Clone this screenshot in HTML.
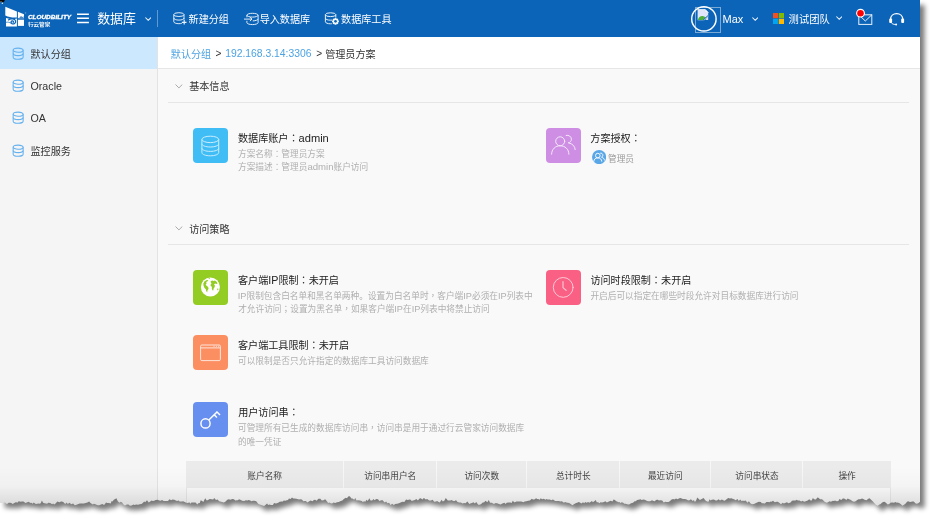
<!DOCTYPE html>
<html lang="zh-CN">
<head>
<meta charset="utf-8">
<title>数据库 - 管理员方案</title>
<style>
*{box-sizing:border-box;margin:0;padding:0}
html,body{width:930px;height:517px;overflow:hidden;background:#fff}
body{font-family:"Liberation Sans","Noto Sans CJK SC",sans-serif;color:#333;position:relative;-webkit-font-smoothing:antialiased}
.abs{position:absolute}
#shadow{position:absolute;left:0;top:0;width:930px;height:517px;z-index:0}
#app{will-change:transform;position:absolute;left:0;top:0;width:920px;height:512px;overflow:hidden;z-index:1;
  clip-path:url(#tear)}
#hdr{position:absolute;left:0;top:0;width:920px;height:37px;background:#0c64b8;color:#fff}
#hdr .t{position:absolute;white-space:nowrap;color:#fff;font-size:10.1px;line-height:14px}
#side{position:absolute;left:0;top:37px;width:158px;height:480px;background:#f5f5f5;border-right:1px solid #e3e3e3}
#side .it{position:absolute;left:0;width:157px;height:32px}
#side .it.sel{background:#cce8ff}
#side .it span{position:absolute;left:30.5px;top:11px;font-size:10.1px;line-height:14px;color:#333;white-space:nowrap}
#side .it svg{position:absolute;left:11.6px}
#main{position:absolute;left:158px;top:37px;width:762px;height:480px;background:#f9f9f9}
#crumb{position:absolute;left:0;top:0;width:762px;height:32px;background:#fff;border-bottom:1px solid #e6e6e6;font-size:10.1px;line-height:14px;white-space:nowrap}
#crumb a,#crumb span{position:absolute;top:10px;color:#333}
#crumb a{color:#4da3e2;text-decoration:none}
.sec{position:absolute;left:10px;width:741px;height:1px;background:#e6e6e6}
.sech{position:absolute;left:31.2px;font-size:10.1px;line-height:14px;color:#333;white-space:nowrap}
.chev{position:absolute;left:16.5px}
.tile{position:absolute;width:35px;height:35px;border-radius:4px}
.tile svg{position:absolute;left:0;top:0;width:35px;height:35px}
.ttl{position:absolute;font-size:10.1px;line-height:14px;color:#222;white-space:nowrap}
.sub{position:absolute;font-size:8.68px;line-height:12.8px;color:#afafaf;white-space:nowrap}
#tbl{position:absolute;left:27.8px;top:423.5px;width:705px;height:60px}
#tbl .tb{position:absolute;left:0;top:27.7px;width:705px;height:40px;background:#fbfbfb;border-left:1px solid #e9e9e9;border-right:1px solid #e9e9e9}
#tbl .th{position:absolute;top:0;height:27.7px;background:#ebebeb;font-size:8.68px;line-height:31.3px;color:#444;text-align:center;white-space:nowrap;border-right:1px solid #f7f7f7;overflow:hidden}
.l{font-size:1.06em;font-weight:normal}
.p{font-family:"Noto Sans CJK TC","Noto Sans CJK SC",sans-serif;font-style:normal;font-feature-settings:"locl" 0}
#fade{position:absolute;left:0;top:466px;width:920px;height:40px;background:linear-gradient(to bottom,rgba(0,0,0,0),rgba(0,0,0,.02) 50%,rgba(0,0,0,.115));pointer-events:none}
</style>
</head>
<body>
<svg width="0" height="0" style="position:absolute">
  <defs>
    <clipPath id="tear"><path id="tearp" d="M0,0H920V501.8L918.7,503.0L916.9,503.8L915.7,503.6L913.7,501.5L912.0,501.5L910.7,501.9L909.3,501.7L908.1,501.2L907.1,501.8L905.4,503.7L904.0,504.7L902.4,505.8L901.2,504.6L899.6,503.3L897.7,502.4L896.8,502.8L895.4,502.0L894.0,502.8L892.8,502.6L891.6,502.6L890.6,502.7L889.2,504.0L887.7,504.6L885.9,502.8L884.5,501.7L883.2,501.9L881.9,502.7L880.7,503.9L879.4,504.4L877.6,505.7L876.0,505.1L874.2,502.9L872.7,501.2L870.8,499.4L869.6,498.3L868.3,498.8L866.4,500.2L864.5,499.7L863.4,498.9L862.0,498.4L860.3,499.3L858.5,499.2L857.6,499.8L855.6,501.3L854.0,501.7L852.6,501.2L851.5,500.4L850.5,499.7L849.1,499.3L847.7,498.6L846.3,500.1L845.1,499.1L844.0,498.6L842.8,498.6L841.3,499.9L839.4,498.9L838.4,501.1L836.6,501.3L835.0,500.4L834.0,500.9L832.9,500.7L830.9,501.7L829.6,501.2L827.9,502.3L826.6,502.7L824.6,501.7L823.4,500.5L822.0,499.3L820.1,499.3L818.4,497.8L817.4,497.5L815.9,499.4L814.1,499.2L812.9,497.9L811.7,500.5L810.5,500.4L809.3,499.3L807.7,500.6L805.8,501.3L804.0,501.8L802.8,500.7L801.1,501.6L799.6,500.4L797.8,500.5L796.8,499.8L795.5,500.4L793.5,500.6L791.9,500.8L790.9,502.3L789.8,502.7L788.3,503.2L787.0,502.2L785.6,502.7L783.9,503.6L782.8,502.7L780.9,504.3L779.6,502.9L777.7,501.8L776.7,501.7L774.8,502.2L773.0,500.8L771.5,501.7L770.6,501.5L769.5,502.2L768.1,502.0L766.4,502.1L764.9,503.4L763.0,503.2L761.8,503.3L760.8,502.1L758.8,501.7L757.1,502.4L756.0,503.1L754.5,503.8L753.5,504.0L752.0,504.2L750.6,503.6L748.9,501.3L747.5,502.7L745.6,500.6L744.0,501.1L742.9,500.5L741.8,501.3L740.2,499.6L738.8,500.9L737.5,499.1L735.7,500.2L734.6,499.4L733.4,499.1L732.5,498.7L731.4,498.2L729.9,498.4L728.2,497.9L726.3,499.5L724.7,500.7L723.1,500.2L721.9,499.5L720.0,500.6L718.7,499.3L716.9,500.6L715.6,500.6L713.8,499.4L711.8,499.7L710.6,500.6L709.6,499.3L708.5,501.8L707.1,501.4L705.2,500.3L703.6,498.0L701.8,499.0L699.9,500.0L698.5,498.8L697.3,497.5L696.1,500.4L694.9,502.0L693.9,500.0L692.8,500.9L690.9,499.2L689.1,500.5L687.8,500.3L686.2,499.2L684.4,498.9L683.1,499.1L682.2,498.7L680.5,498.0L679.4,498.2L677.5,499.3L676.1,498.5L674.2,499.6L673.3,499.1L671.6,499.6L669.8,501.3L668.4,502.1L666.6,501.9L665.4,501.8L663.7,502.4L662.2,500.6L660.3,500.3L658.9,500.5L657.9,499.8L656.9,499.8L655.8,500.3L654.7,501.3L653.5,501.1L652.0,500.3L650.1,501.3L648.4,501.3L647.1,501.1L645.3,500.1L643.8,499.5L642.6,499.7L641.7,500.0L640.5,499.2L638.6,499.8L637.1,500.1L635.8,501.2L634.6,501.2L633.0,502.8L631.1,503.2L629.1,504.6L628.0,504.4L626.5,504.1L625.6,503.8L624.2,503.8L623.2,502.7L621.9,502.3L620.4,502.9L619.3,502.1L618.3,502.3L617.2,501.5L616.2,501.3L614.9,500.1L613.6,499.5L612.4,501.6L610.8,500.7L608.9,501.4L606.9,502.4L605.3,501.2L604.0,502.1L602.2,502.6L600.5,502.3L599.4,503.3L598.2,502.2L596.7,502.2L595.8,500.1L594.6,500.9L592.9,502.3L591.9,501.1L591.0,501.7L589.2,502.7L588.2,501.9L586.5,502.7L585.3,502.0L584.1,503.2L583.1,502.2L581.3,503.5L579.9,502.5L578.7,501.9L577.2,502.7L576.1,503.1L574.3,503.9L572.4,505.2L570.7,503.9L569.1,503.1L567.5,502.8L566.2,502.4L565.1,501.9L563.9,502.8L561.9,501.2L560.7,501.4L558.8,501.1L557.1,500.9L555.1,501.0L554.2,500.2L552.9,499.6L551.1,500.3L550.0,499.4L549.0,499.4L547.5,499.4L546.6,499.0L545.4,499.7L543.9,498.7L542.1,499.2L540.8,498.3L539.7,499.7L538.2,499.1L537.2,499.0L536.1,498.3L534.3,499.5L532.9,499.4L531.8,498.8L529.9,500.4L528.1,500.8L526.3,501.2L524.7,501.6L523.2,502.2L521.5,501.5L519.5,501.6L518.0,501.6L516.3,501.4L515.1,502.2L514.2,502.2L512.8,500.7L511.6,503.1L510.4,502.5L508.5,502.4L506.7,502.7L505.6,503.9L504.4,502.8L502.4,503.5L500.6,504.4L498.9,504.1L497.8,503.4L495.8,502.9L494.4,503.7L493.2,503.7L492.0,502.8L490.0,502.7L488.8,500.1L487.3,502.3L485.5,500.7L484.2,502.2L482.3,502.8L481.3,504.0L479.6,504.8L478.2,504.7L476.2,502.0L474.9,503.6L473.4,502.2L472.0,503.1L471.0,503.3L469.3,503.9L467.4,501.4L465.5,503.2L464.0,503.1L462.6,503.6L460.8,502.5L459.1,502.6L457.5,501.9L455.9,500.1L455.0,501.1L453.5,501.1L452.4,500.6L451.3,500.0L450.4,500.5L449.1,500.4L447.8,500.6L445.8,497.9L444.3,500.8L442.8,501.4L441.6,499.7L439.8,502.4L438.6,502.0L437.1,500.9L436.1,501.4L434.2,501.8L432.6,499.7L431.0,500.5L429.2,500.5L427.2,499.1L425.8,499.4L423.9,498.1L422.3,499.5L420.8,498.3L419.6,498.5L417.9,500.6L416.3,499.1L414.9,499.9L413.1,500.5L411.7,501.1L410.7,499.7L409.6,499.6L407.8,500.0L406.1,499.6L404.3,502.1L402.8,501.8L401.1,502.2L399.5,503.0L398.2,503.6L397.0,503.8L395.2,504.1L393.8,504.9L392.2,503.8L390.5,504.9L389.1,502.7L387.5,503.2L386.1,501.5L384.8,502.4L383.7,501.6L382.6,500.2L381.3,500.3L379.4,500.9L378.0,499.2L376.3,499.0L374.5,500.2L373.6,499.0L372.1,500.4L370.5,500.4L369.3,498.3L367.8,500.9L366.5,499.8L365.3,501.8L364.1,501.3L362.8,501.9L361.8,500.9L359.9,500.5L358.0,500.2L356.5,500.5L355.3,498.0L354.2,499.8L352.5,498.5L351.4,498.5L349.8,496.3L348.1,496.5L347.1,498.2L345.8,497.8L343.8,499.0L342.4,500.6L340.7,500.9L338.8,501.9L337.0,502.2L335.2,502.9L333.5,502.5L332.1,503.4L330.8,503.2L329.3,502.5L328.1,503.0L327.1,501.5L325.2,499.3L323.4,500.2L321.8,500.6L320.3,498.7L318.4,498.8L316.6,500.7L315.1,499.8L313.8,499.9L312.5,501.2L310.5,500.6L309.3,501.2L307.4,502.6L305.9,501.0L304.6,501.0L303.5,501.2L301.8,499.5L300.2,499.2L299.0,499.4L297.4,498.9L296.4,498.8L294.5,498.6L293.3,498.5L292.0,497.6L290.6,499.0L289.0,498.5L288.0,500.1L286.7,500.2L285.4,500.8L283.8,500.5L282.8,501.4L281.6,501.6L279.7,501.7L278.6,502.6L277.0,503.2L275.8,503.4L274.1,503.1L272.9,505.0L270.9,505.1L269.5,504.4L268.1,505.0L267.1,503.4L265.7,504.8L264.1,505.9L262.7,505.4L261.2,505.1L259.8,504.5L258.8,504.3L257.9,503.6L256.5,501.6L255.6,500.9L254.4,500.8L252.9,500.8L251.6,501.3L250.2,500.4L248.6,499.9L247.5,500.4L245.8,500.3L244.2,501.1L242.2,500.8L240.3,499.8L239.0,499.2L237.9,500.3L236.9,500.3L235.3,500.4L233.9,499.3L232.3,499.1L230.4,499.8L228.8,499.2L227.3,499.8L225.6,501.6L223.9,502.4L222.0,502.0L220.3,501.5L219.1,501.2L217.6,499.5L216.0,499.9L214.2,497.9L213.2,499.5L211.5,499.2L209.6,499.0L208.1,499.9L206.7,500.6L205.2,498.2L203.3,502.0L202.2,500.9L200.7,500.3L199.8,503.0L198.3,503.3L197.3,504.4L195.6,502.6L194.0,502.6L192.6,502.4L191.4,502.4L190.4,503.7L189.2,502.3L188.0,503.0L186.3,502.8L184.7,502.0L183.1,501.3L182.0,501.5L180.7,501.6L179.6,501.5L178.6,500.6L177.0,500.9L175.3,500.2L174.4,499.8L172.5,499.4L171.2,500.3L169.4,499.2L168.0,501.0L166.1,500.9L165.1,501.1L163.6,500.9L162.1,500.0L160.5,500.8L159.4,500.6L157.4,499.8L155.6,499.9L154.3,500.7L152.8,500.9L151.6,500.4L150.6,501.2L148.7,502.4L147.0,500.3L145.2,502.2L144.2,501.4L142.5,503.2L141.5,504.1L139.6,504.2L138.1,504.8L136.2,504.6L134.6,504.9L133.5,504.5L131.6,505.5L130.0,505.7L128.4,504.5L126.8,504.4L125.0,505.4L123.4,504.4L122.1,502.6L120.7,501.7L119.6,502.7L117.8,501.2L116.4,498.2L115.2,498.9L113.8,499.8L112.6,501.6L111.7,501.1L110.7,503.4L108.9,503.1L107.3,503.1L106.1,502.4L104.1,505.1L102.3,503.9L101.0,504.5L99.2,505.3L97.8,505.2L96.5,504.8L94.9,503.9L93.8,503.7L92.9,504.5L91.3,503.4L90.2,502.8L89.2,501.5L87.4,502.4L85.7,503.1L83.8,503.4L82.8,503.4L81.5,503.6L79.7,503.6L77.8,504.3L76.5,504.7L74.8,505.2L73.1,503.4L71.1,504.3L69.7,502.8L67.7,504.1L66.8,502.6L65.2,503.9L63.3,501.9L61.8,501.5L60.8,501.4L59.9,502.3L58.7,501.9L57.2,501.5L56.1,503.1L54.3,504.4L53.1,503.5L52.1,504.3L50.2,503.1L48.3,502.7L47.1,503.7L46.0,503.4L44.5,503.3L43.1,502.8L41.9,500.5L40.7,503.2L39.5,503.7L38.5,503.5L37.2,503.7L35.9,504.0L34.7,503.2L33.7,502.5L32.6,503.8L31.5,502.8L30.5,502.9L28.5,501.8L26.8,502.4L25.4,503.0L23.5,501.6L21.7,501.6L19.9,501.7L18.9,501.1L17.7,502.6L15.7,502.3L14.3,503.1L12.7,504.0L11.3,502.9L10.1,502.8L8.6,502.8L7.0,504.1L6.1,503.6L5.1,502.4L3.5,502.4L1.9,502.9L0.0,502.9Z"/></clipPath>
  </defs>
</svg>
<svg id="shadow" viewBox="0 0 930 517">
  <defs><filter id="blur" x="-5%" y="-5%" width="110%" height="110%"><feGaussianBlur stdDeviation="2.5"/></filter></defs>
  <use href="#tearp" transform="translate(4.6,5)" fill="#000" opacity="0.52" filter="url(#blur)"/>
</svg>
<div id="app">
  <div id="hdr">

    <!-- cursor artifact -->
    <svg class="abs" style="left:0;top:0" width="8" height="6" viewBox="0 0 8 6"><path d="M0 0H4.6C4.9 .9 4.3 1.7 3.3 1.9L2.9 2.5H1.9L1.6 1.9H0Z" fill="#060606"/><path d="M0 1.5H1.9L2.2 2.3H0Z" fill="#8d8d8d"/><circle cx="2.4" cy="3.2" r=".75" fill="#fff" opacity=".95"/></svg>
    <!-- logo -->
    <svg class="abs" style="left:0;top:0" width="76" height="37" viewBox="0 0 76 37">
      <g fill="#fff">
        <path d="M5.3 6.7L16.9 11.4V17.4C13.2 18 9 17 5.3 15.4Z"/>
        <path d="M6 18.1C9.5 19.2 13.5 19.3 16.9 18.5V26.6H6Z"/>
        <path d="M17.9 11.8L24 14.3V18.3H17.9Z"/>
        <path d="M17.9 19.7H24V25.9H17.9Z"/>
      </g>
      <path d="M8.4 19.9C10.6 18.2 14.9 18.5 15.6 20.9C16.2 23.1 13.7 24.5 11.9 23.6C10.6 22.9 10.8 21.1 12.2 20.8C13.3 20.6 13.9 21.6 13.2 22.3" fill="none" stroke="#0c64b8" stroke-width="1.25" stroke-linecap="round"/>
      <path d="M6 22.3C8 21.9 9.6 22.3 11 23.2" fill="none" stroke="#0c64b8" stroke-width=".7"/>
      <path d="M19.4 17.6L21 16L22.4 17L23.6 16.2V18.1H19.4Z" fill="#0c64b8" opacity=".75"/>
      <circle cx="25.5" cy="12.9" r=".55" fill="none" stroke="#fff" stroke-width=".25" opacity=".8"/>
      <text x="27.9" y="18.7" font-family="'Liberation Sans',sans-serif" font-size="5.4" font-weight="bold" font-style="italic" fill="#fff" stroke="#fff" stroke-width=".28" textLength="43.2" lengthAdjust="spacingAndGlyphs">CLOUDBILITY</text>
      <text x="27.9" y="25.6" font-family="'Liberation Sans','Noto Sans CJK SC',sans-serif" font-size="4.9" font-weight="bold" fill="#fff" opacity=".95" textLength="22.4" lengthAdjust="spacingAndGlyphs">行云管家</text>
    </svg>
    <!-- hamburger -->
    <svg class="abs" style="left:77px;top:13px" width="12" height="11" viewBox="0 0 12 11"><path d="M0 1.3H11.9M0 5.3H11.9M0 9.4H11.9" stroke="#fff" stroke-width="1.55"/></svg>
    <svg class="abs" style="left:145px;top:16.5px" width="6.4" height="4.2" viewBox="0 0 6.4 4.2"><path d="M.4 .5L3.2 3.3L6 .5" fill="none" stroke="#fff" stroke-width="1.05" opacity=".95"/></svg>
    <div class="abs" style="left:157.2px;top:10px;width:1px;height:16.5px;background:rgba(255,255,255,.35)"></div>
    <!-- new group -->
    <svg class="abs" style="left:172px;top:11px" width="16" height="15" viewBox="0 0 16 15" fill="none" stroke="#fff" stroke-width=".95" opacity=".92">
      <ellipse cx="6.9" cy="3.6" rx="5.1" ry="1.9"/>
      <path d="M1.8 3.6V10.7C1.8 11.8 4 12.7 6.9 12.7C8 12.7 9 12.55 9.8 12.3M12 3.6V8.6"/>
      <path d="M1.8 7.1C1.8 8.2 4 9.1 6.9 9.1C9.8 9.1 12 8.2 12 7.1"/>
      <path d="M12.2 9V13.6M9.9 11.3H14.5" stroke-width="1.15"/>
    </svg>
    <!-- import -->
    <svg class="abs" style="left:243px;top:11px" width="17" height="15" viewBox="0 0 17 15" fill="none" stroke="#fff" stroke-width=".95" opacity=".92">
      <ellipse cx="9.5" cy="4.2" rx="5.6" ry="1.9"/>
      <path d="M3.9 4.2V6.3M3.9 9.8V11.6C3.9 12.7 6.4 13.6 9.5 13.6C12.6 13.6 15.1 12.7 15.1 11.6V4.2"/>
      <path d="M9.8 9.9C12.6 9.8 15.1 9 15.1 7.9"/>
      <path d="M1 8.1H9M6.9 6.1L9 8.1L6.9 10.1"/>
    </svg>
    <!-- tools -->
    <svg class="abs" style="left:324px;top:11px" width="17" height="15" viewBox="0 0 17 15" fill="none" stroke="#fff" stroke-width=".95" opacity=".95">
      <ellipse cx="6.6" cy="3.7" rx="5.2" ry="1.9"/>
      <path d="M1.4 3.7V10.8C1.4 11.9 3.6 12.8 6.6 12.8C7 12.8 7.4 12.78 7.8 12.75M11.8 3.7V6.6"/>
      <path d="M1.4 7.2C1.4 8.3 3.6 9.2 6.6 9.2C7.2 9.2 7.8 9.15 8.3 9.08"/>
      <g stroke="none" fill="#fff"><path d="M11.5 6.9l.9.1.3 1 .9-.45.7.7-.45.9 1 .3.1.9-.1.9-1 .3.45.9-.7.7-.9-.45-.3 1-.9.1-.9-.1-.3-1-.9.45-.7-.7.45-.9-1-.3-.1-.9.1-.9 1-.3-.45-.9.7-.7.9.45.3-1z"/></g>
      <circle cx="11.5" cy="10.35" r="1.35" fill="#0c64b8" stroke="none"/>
    </svg>
    <!-- avatar -->
    <div class="abs" style="left:695px;top:7px;width:26px;height:26px;border:1px solid rgba(215,225,235,.55)"></div>
    <svg class="abs" style="left:696.5px;top:8.8px" width="12" height="12" viewBox="0 0 12 12">
      <path d="M.6 .6H8.2L11.2 3.6V7.2L7.2 11.2H.6Z" fill="#dfe6fb"/>
      <path d="M8.2 .6V3.6H11.2Z" fill="#fff" stroke="#c9cfe0" stroke-width=".4"/>
      <path d="M.6 .6H8.2L11.2 3.6" fill="none" stroke="#f4f6fb" stroke-width=".8"/>
      <path d="M.9 10.9C1.5 8 4 6.6 6.4 7.2C7.4 7.5 8.2 8 8.6 8.6L6.4 10.9Z" fill="#4caf3a"/>
      <path d="M9.4 8.9L11.2 7.6V10.9H8.4Z" fill="#d9dde6"/>
      <path d="M6.2 11L11 6.6" stroke="#0c64b8" stroke-width="1"/>
    </svg>
    <svg class="abs" style="left:690px;top:5px" width="28" height="28" viewBox="0 0 28 28"><circle cx="13.9" cy="13.9" r="12.2" fill="none" stroke="#fff" stroke-width="1.45"/></svg>
    <svg class="abs" style="left:752px;top:16.5px" width="6.4" height="4.2" viewBox="0 0 6.4 4.2"><path d="M.4 .5L3.2 3.3L6 .5" fill="none" stroke="#fff" stroke-width="1.05" opacity=".95"/></svg>
    <!-- ms logo -->
    <svg class="abs" style="left:772.9px;top:13.1px" width="11" height="11" viewBox="0 0 11 11"><rect width="5.2" height="5.2" fill="#f25022"/><rect x="5.8" width="5.2" height="5.2" fill="#7fba00"/><rect y="5.8" width="5.2" height="5.2" fill="#00a4ef"/><rect x="5.8" y="5.8" width="5.2" height="5.2" fill="#ffb900"/></svg>
    <svg class="abs" style="left:836px;top:16px" width="6.4" height="4.2" viewBox="0 0 6.4 4.2"><path d="M.4 .5L3.2 3.3L6 .5" fill="none" stroke="#fff" stroke-width="1.05" opacity=".95"/></svg>
    <!-- mail -->
    <svg class="abs" style="left:855px;top:8px" width="20" height="19" viewBox="0 0 20 19">
      <rect x="3.8" y="6.8" width="13" height="9.6" fill="none" stroke="#fff" stroke-width="1" opacity=".9"/>
      <path d="M3.8 6.8L10.3 13L16.8 6.8" fill="none" stroke="#fff" stroke-width="1" opacity=".9"/>
      <circle cx="5.5" cy="5.2" r="4.4" fill="#fff"/><circle cx="5.5" cy="5.2" r="3.3" fill="#f00"/>
    </svg>
    <!-- headset -->
    <svg class="abs" style="left:887px;top:11px" width="19" height="16" viewBox="0 0 19 16" fill="none" stroke="#fff">
      <path d="M3.6 8.2C3.6 4.8 6.2 2.6 9.65 2.6C13.1 2.6 15.7 4.8 15.7 8.2" stroke-width="1.25"/>
      <rect x="2.2" y="7.6" width="2.9" height="4.4" rx="1" fill="#fff" stroke="none"/>
      <rect x="14.2" y="7.6" width="2.9" height="4.4" rx="1" fill="#fff" stroke="none"/>
      <path d="M4.2 11.6C4.8 12.8 6.4 13.4 8.6 13.5" stroke-width=".9"/>
      <circle cx="9.1" cy="13.5" r="1" fill="#fff" stroke="none"/>
    </svg>
    <div class="t" style="left:97.2px;top:9px;font-size:12.9px;line-height:20px">数据库</div>
    <div class="t" style="left:188.6px;top:13px">新建分组</div>
    <div class="t" style="left:259.7px;top:13px">导入数据库</div>
    <div class="t" style="left:341.1px;top:13px">数据库工具</div>
    <div class="t" style="left:722.5px;top:12px;font-size:11px">Max</div>
    <div class="t" style="left:788.6px;top:13px;font-size:10.3px">测试团队</div>
  </div>
  <div id="side">
    <div class="it sel" style="top:0"><svg style="top:9.5px" width="12.5" height="13.45" viewBox="0 0 13 14" fill="none" stroke="#64b1ee" stroke-width="1.1"><ellipse cx="6.4" cy="3.3" rx="5.2" ry="2.1"/><path d="M1.2 3.3V10.6C1.2 11.8 3.5 12.7 6.4 12.7C9.3 12.7 11.6 11.8 11.6 10.6V3.3"/><path d="M1.2 6.9C1.2 8.1 3.5 9 6.4 9C9.3 9 11.6 8.1 11.6 6.9"/></svg><span>默认分组</span></div>
    <div class="it" style="top:32px"><svg style="top:10.2px" width="12.5" height="13.45" viewBox="0 0 13 14" fill="none" stroke="#64b1ee" stroke-width="1.1"><ellipse cx="6.4" cy="3.3" rx="5.2" ry="2.1"/><path d="M1.2 3.3V10.6C1.2 11.8 3.5 12.7 6.4 12.7C9.3 12.7 11.6 11.8 11.6 10.6V3.3"/><path d="M1.2 6.9C1.2 8.1 3.5 9 6.4 9C9.3 9 11.6 8.1 11.6 6.9"/></svg><span style="top:10px"><b class="l">Oracle</b></span></div>
    <div class="it" style="top:65px"><svg style="top:9.3px" width="12.5" height="13.45" viewBox="0 0 13 14" fill="none" stroke="#64b1ee" stroke-width="1.1"><ellipse cx="6.4" cy="3.3" rx="5.2" ry="2.1"/><path d="M1.2 3.3V10.6C1.2 11.8 3.5 12.7 6.4 12.7C9.3 12.7 11.6 11.8 11.6 10.6V3.3"/><path d="M1.2 6.9C1.2 8.1 3.5 9 6.4 9C9.3 9 11.6 8.1 11.6 6.9"/></svg><span style="top:9px"><b class="l">OA</b></span></div>
    <div class="it" style="top:97px"><svg style="top:10.2px" width="12.5" height="13.45" viewBox="0 0 13 14" fill="none" stroke="#64b1ee" stroke-width="1.1"><ellipse cx="6.4" cy="3.3" rx="5.2" ry="2.1"/><path d="M1.2 3.3V10.6C1.2 11.8 3.5 12.7 6.4 12.7C9.3 12.7 11.6 11.8 11.6 10.6V3.3"/><path d="M1.2 6.9C1.2 8.1 3.5 9 6.4 9C9.3 9 11.6 8.1 11.6 6.9"/></svg><span>监控服务</span></div>
  </div>
  <div id="main">
    <div id="crumb">
      <a style="left:12.8px;top:11px">默认分组</a><span style="left:57.6px">&gt;</span>
      <a style="left:67.2px;font-size:10.35px">192.168.3.14:3306</a><span style="left:158.2px">&gt;</span>
      <span style="left:167.2px;top:11px">管理员方案</span>
    </div>

    <svg class="chev" style="top:47.2px" width="8" height="5" viewBox="0 0 8 5"><path d="M.5 .5L3.9 3.9L7.3 .5" fill="none" stroke="#aaa" stroke-width="1"/></svg>
    <div class="sech" style="top:43px">基本信息</div>
    <div class="sec" style="top:65px"></div>

    <div class="tile" style="left:35px;top:91px;background:#41bdf6"><svg viewBox="0 0 35 35" fill="none" stroke="#fff" stroke-width="1" opacity=".72"><ellipse cx="17.3" cy="11.4" rx="8.4" ry="3.2"/><path d="M8.9 11.4V24.6C8.9 26.4 12.7 27.8 17.3 27.8C21.9 27.8 25.7 26.4 25.7 24.6V11.4"/><path d="M8.9 15.8C8.9 17.6 12.7 19 17.3 19C21.9 19 25.7 17.6 25.7 15.8"/><path d="M8.9 20.2C8.9 22 12.7 23.4 17.3 23.4C21.9 23.4 25.7 22 25.7 20.2"/></svg></div>
    <div class="ttl" style="left:80px;top:94px">数据库账户<i class="p">：</i><b class="l" style="font-size:11.1px">admin</b></div>
    <div class="sub" style="left:80px;top:110px">方案名称<i class="p">：</i>管理员方案</div>
    <div class="sub" style="left:80px;top:123px">方案描述<i class="p">：</i>管理员<b class="l" style="font-size:9.6px">admin</b>账户访问</div>

    <div class="tile" style="left:387.7px;top:91px;background:#cd8ee3"><svg viewBox="0 0 35 35" fill="none" stroke="#fff" stroke-width="1" opacity=".8" stroke-linecap="round"><circle cx="14.2" cy="13.3" r="4.5"/><path d="M5.6 26.2C5.6 21 9.5 17.8 14.2 17.8C18.9 17.8 22.9 21 22.9 26.2"/><path d="M20.2 7.4C22.6 6.8 25.4 8.4 25.4 11.2C25.4 13.2 24 14.6 22.4 14.9"/><path d="M23 15C26.4 15.6 29 18.2 29.2 21.6"/></svg></div>
    <div class="ttl" style="left:432.3px;top:94px">方案授权<i class="p">：</i></div>
    <svg class="abs" style="left:433.8px;top:113.1px" width="14.2" height="14.2" viewBox="0 0 14.2 14.2"><circle cx="7.1" cy="7.1" r="7.1" fill="#5aa7e8"/><g fill="none" stroke="#fff" stroke-width=".9"><circle cx="5.8" cy="5.6" r="2.3"/><path d="M1.8 11.6C1.8 9.2 3.6 7.9 5.8 7.9C8 7.9 9.8 9.2 9.8 11.6"/><path d="M8.2 3.2C9.6 2.9 10.9 3.8 10.9 5.2C10.9 6.3 10.2 7 9.4 7.2M9.8 7.4C11.4 7.7 12.4 8.9 12.5 10.4"/></g></svg>
    <div class="sub" style="left:450px;top:116px;color:#999">管理员</div>

    <svg class="chev" style="top:189.2px" width="8" height="5" viewBox="0 0 8 5"><path d="M.5 .5L3.9 3.9L7.3 .5" fill="none" stroke="#aaa" stroke-width="1"/></svg>
    <div class="sech" style="top:186px">访问策略</div>
    <div class="sec" style="top:207px"></div>

    <div class="tile" style="left:35px;top:233px;background:#93cc22"><svg viewBox="0 0 35 35"><circle cx="17.4" cy="17" r="9.5" fill="#fff"/><g fill="#93cc22"><path d="M10.3 13.6L11.6 11.3L13.9 9.9L15.4 10.3L14.3 11.6L13.2 12.1L13.6 13.4L12.6 14.4L13.3 15.6L14.6 16.4L15.6 18L15.2 19.4L14.4 20.4L14.2 22.4L13.2 21L12.8 19.2L11.4 17.8L10.6 16Z"/><path d="M17.6 11.3L19.2 10.5L20.6 11.1L21.9 10.6L23.6 11.8L24.6 13.4L23.4 14L22.2 13.5L21 14.2L21.9 15.6L21.6 17.2L20.6 18.6L20.3 20.4L19.4 20.2L18.8 18.4L18.9 16.8L17.7 15.9L17.6 14.4L18.6 13.3L17.8 12.5Z"/><path d="M24.6 18.2L25.5 18.9L24.9 20.4L24.1 19.6Z"/><path d="M15.6 8.2L17 7.9L16.6 9L15.6 9.1Z"/></g></svg></div>
    <div class="ttl" style="left:80px;top:236px">客户端<b class="l">IP</b>限制<i class="p">：</i>未开启</div>
    <div class="sub" style="left:79.8px;top:252px"><b class="l">IP</b>限制包含白名单和黑名单两种。设置为白名单时<i class="p">，</i>客户端<b class="l">IP</b>必须在<b class="l">IP</b>列表中</div>
    <div class="sub" style="left:80.2px;top:265px">才允许访问<i class="p">；</i>设置为黑名单<i class="p">，</i>如果客户端<b class="l">IP</b>在<b class="l">IP</b>列表中将禁止访问</div>

    <div class="tile" style="left:387.7px;top:233px;background:#f96084"><svg viewBox="0 0 35 35" fill="none" stroke="#fff" stroke-width="1" opacity=".66" stroke-linecap="round" stroke-linejoin="round"><circle cx="17.2" cy="17.4" r="9.9"/><path d="M17 11.6V17.6L20.2 20.4" stroke-width="1.15"/></svg></div>
    <div class="ttl" style="left:432.4px;top:236px">访问时段限制<i class="p">：</i>未开启</div>
    <div class="sub" style="left:432.4px;top:253px">开启后可以指定在哪些时段允许对目标数据库进行访问</div>

    <div class="tile" style="left:35px;top:298.3px;background:#fc8f62"><svg viewBox="0 0 35 35" fill="none" stroke="#fff" stroke-width=".95" opacity=".8"><rect x="7.6" y="10" width="19.8" height="15.6" rx="1.3"/><path d="M7.6 12.9H27.4"/><path d="M20.6 11.4H21.6M22.9 11.4H23.9M25.2 11.4H26.2" stroke-width=".9"/></svg></div>
    <div class="ttl" style="left:80px;top:301px">客户端工具限制<i class="p">：</i>未开启</div>
    <div class="sub" style="left:80px;top:318px">可以限制是否只允许指定的数据库工具访问数据库</div>

    <div class="tile" style="left:35px;top:365px;background:#668ff0"><svg viewBox="0 0 35 35" fill="none" stroke="#fff" stroke-width="1.45" stroke-linecap="butt"><circle cx="12.5" cy="21.4" r="4.6"/><path d="M15.8 18.1L24 9.9"/><path d="M23.5 9.4L27 12.9"/><path d="M21 12.5L23.9 15.4"/></svg></div>
    <div class="ttl" style="left:80.2px;top:368px">用户访问串<i class="p">：</i></div>
    <div class="sub" style="left:80px;top:384px">可管理所有已生成的数据库访问串<i class="p">，</i>访问串是用于通过行云管家访问数据库</div>
    <div class="sub" style="left:80px;top:399px">的唯一凭证</div>

    <div id="tbl">
      <div class="tb"></div>
      <div class="th" style="left:0;width:158.7px">账户名称</div>
      <div class="th" style="left:158.7px;width:92.5px">访问串用户名</div>
      <div class="th" style="left:251.2px;width:90.5px">访问次数</div>
      <div class="th" style="left:341.7px;width:92.5px">总计时长</div>
      <div class="th" style="left:434.2px;width:91.5px">最近访问</div>
      <div class="th" style="left:525.7px;width:92px">访问串状态</div>
      <div class="th" style="left:617.7px;width:87.3px;border-right:none">操作</div>
    </div>
  </div>
  <div id="fade"></div>
</div>
</body>
</html>
